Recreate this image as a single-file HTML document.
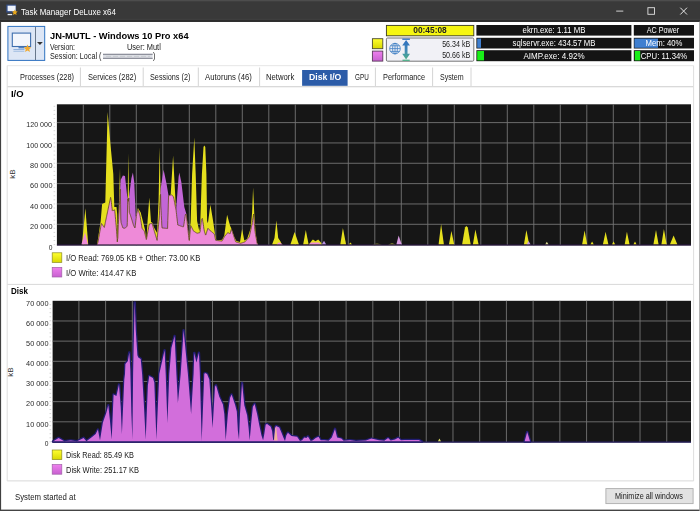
<!DOCTYPE html>
<html><head><meta charset="utf-8"><title>Task Manager DeLuxe x64</title>
<style>
html,body{margin:0;padding:0;background:#fff;}
body{width:700px;height:511px;position:relative;overflow:hidden;font-family:"Liberation Sans",sans-serif;font-size:7.8px;color:#1a1a1a;}
.a{position:absolute;box-sizing:border-box;}
.t{position:absolute;white-space:nowrap;line-height:12px;height:12px;}
#tb{left:0;top:0;width:700px;height:21.7px;background:#393939;}
svg{position:absolute;left:0;top:0;}
</style></head><body>
<div class="a" id="tb"></div>
<svg width="700" height="511" viewBox="0 0 700 511">
<defs>
<linearGradient id="gy" x1="0" y1="0" x2="0" y2="1"><stop offset="0" stop-color="#ffff30"/><stop offset="1" stop-color="#d8d800"/></linearGradient>
<linearGradient id="gm" x1="0" y1="0" x2="0" y2="1"><stop offset="0" stop-color="#ee80ee"/><stop offset="1" stop-color="#c860d0"/></linearGradient>
<linearGradient id="gar" x1="0" y1="0" x2="0" y2="1"><stop offset="0" stop-color="#2f6fc0"/><stop offset="0.5" stop-color="#3f86b8"/><stop offset="1" stop-color="#4db08a"/></linearGradient>
<filter id="bl" x="-5%" y="-50%" width="110%" height="200%"><feGaussianBlur stdDeviation="0.55"/></filter>
</defs>
<!-- title bar shading -->
<rect x="0" y="0" width="700" height="1" fill="#4d4d4d"/>
<rect x="0" y="1" width="700" height="1" fill="#3f3f3f"/>
<rect x="0" y="18.6" width="700" height="1.6" fill="#3e3e3e"/>
<rect x="0" y="20.2" width="700" height="1.5" fill="#2b2b2b"/>
<!-- app icon -->
<g>
<rect x="6.3" y="4.6" width="9.8" height="8" fill="#35508a"/>
<rect x="7.6" y="5.7" width="8" height="5.4" fill="#eef3fc"/>
<rect x="7.6" y="13.9" width="4.6" height="1.3" fill="#e8edf5"/>
<path d="M14.8 9.4l0.85 1.9 2.05 0.2-1.55 1.4 0.45 2.05-1.8-1.05-1.8 1.05 0.45-2.05-1.55-1.4 2.05-0.2z" fill="#eaa81c"/>
</g>
<!-- window controls -->
<path d="M616.2 11.1H623.3" stroke="#e2e2e2" stroke-width="0.9" fill="none"/>
<rect x="647.9" y="7.7" width="6.6" height="6.6" fill="none" stroke="#e2e2e2" stroke-width="0.9"/>
<path d="M680.3 7.7L687 14.5M687 7.7L680.3 14.5" stroke="#ececec" stroke-width="0.95" fill="none"/>
<!-- window borders -->
<rect x="0" y="21.6" width="1.1" height="490" fill="#404040"/>
<rect x="0" y="509.6" width="700" height="1.4" fill="#444"/>
<rect x="699.2" y="21.6" width="0.8" height="490" fill="#a0a0a0"/>
<!-- computer button -->
<rect x="7.9" y="26.4" width="36.8" height="34" fill="#dde6f5" stroke="#2f72c0" stroke-width="1"/>
<path d="M35.5 27V60" stroke="#4a5a70" stroke-width="0.8"/>
<path d="M37 41.9h5.8l-2.9 3z" fill="#333"/>
<g>
<rect x="12.3" y="33.1" width="18.3" height="13.4" fill="#f3f6fc" stroke="#3f6fae" stroke-width="1.1"/>
<rect x="18.5" y="47" width="6" height="1.4" fill="#4f7fc0"/>
<rect x="13.4" y="49" width="11" height="1.1" fill="#8fb0dc"/>
<rect x="13.4" y="50.8" width="11" height="1.1" fill="#a9c2e4"/>
<path d="M27.5 44.6l1.1 2.5 2.7 0.3-2 1.8 0.6 2.7-2.4-1.4-2.4 1.4 0.6-2.7-2-1.8 2.7-0.3z" fill="#f0aa30"/>
</g>
<!-- blurred session name -->
<g filter="url(#bl)"><rect x="103" y="53.8" width="49.6" height="5.2" fill="#dcdee4"/><path d="M103 54.4H152.6M103 58.4H152.6" stroke="#8e919c" stroke-width="1.1"/><path d="M106 56.4H150" stroke="#c2c5cc" stroke-width="0.8" stroke-dasharray="5 2"/></g>
<!-- timer -->
<rect x="386.4" y="25.4" width="87.4" height="10.4" fill="#f6f612" stroke="#3a3a20" stroke-width="0.9"/>
<rect x="386.4" y="38" width="87.4" height="23.2" rx="1.2" fill="#f1f1f6" stroke="#767676" stroke-width="1"/>
<rect x="372.4" y="38.7" width="10.4" height="10" fill="url(#gy)" stroke="#4a4a30" stroke-width="0.9"/>
<rect x="372.4" y="51.1" width="10.4" height="10" fill="url(#gm)" stroke="#5a3a5a" stroke-width="0.9"/>
<!-- globe -->
<g fill="none" stroke="#3f7fc4" stroke-width="0.8">
<circle cx="395" cy="48.6" r="5.3"/>
<ellipse cx="395" cy="48.6" rx="2.4" ry="5.3"/>
<path d="M389.7 48.6H400.3M395 43.3V53.9M390.5 45.8H399.5M390.5 51.4H399.5"/>
</g>
<!-- arrows -->
<path d="M402.3 39.2H409.9" stroke="#2f6fc0" stroke-width="1.3"/>
<path d="M402.5 60.3H409.7" stroke="#4db08a" stroke-width="1.3"/>
<path d="M406.1 40l3.9 5.6h-2.5v8.2h2.5l-3.9 5.6l-3.9-5.6h2.5v-8.2h-2.5z" fill="url(#gar)"/>
<!-- black bars -->
<g fill="#141414">
<rect x="476.4" y="25" width="155" height="10.6"/>
<rect x="476.4" y="37.8" width="155" height="10.7"/>
<rect x="476.4" y="50.2" width="155" height="11"/>
<rect x="633.8" y="25" width="60.2" height="10.6"/>
<rect x="633.8" y="37.8" width="60.2" height="10.7"/>
<rect x="633.8" y="50.2" width="60.2" height="11"/>
</g>
<rect x="477.2" y="38.6" width="3.8" height="9.2" fill="#3f7fd0"/>
<rect x="477.2" y="51" width="6.8" height="9.4" fill="#18ee18"/>
<rect x="634.4" y="38.6" width="23.6" height="9.2" fill="#3f7fd0"/>
<rect x="634.8" y="51" width="5.4" height="9.4" fill="#18ee18"/>
<!-- tab strip + panel -->
<path d="M7.2 65.7H693.6" stroke="#e6e6e6" stroke-width="1" fill="none"/><path d="M7.2 86.8H693.6" stroke="#cdcdcd" stroke-width="1.1" fill="none"/><path d="M7.2 284.4H693.6M7.2 480.9H693.6" stroke="#d8d8d8" stroke-width="1" fill="none"/>
<path d="M7.2 65.6V481M693.6 65.6V481" stroke="#dedede" stroke-width="1" fill="none"/>
<path d="M80.4 67.5V86M143.2 67.5V86M198.3 67.5V86M259.6 67.5V86M375.4 67.5V86M432.6 67.5V86M471 67.5V86" stroke="#d4d4d4" stroke-width="1" fill="none"/>
<rect x="302.1" y="70" width="45.5" height="15.8" fill="#2c5ca8"/>
<!-- charts -->
<rect x="56.9" y="104.3" width="634.1" height="141.1" fill="#161616"/>
<path d="M83.30 104.3V245.4M109.80 104.3V245.4M136.30 104.3V245.4M162.80 104.3V245.4M189.30 104.3V245.4M215.80 104.3V245.4M242.30 104.3V245.4M268.80 104.3V245.4M295.30 104.3V245.4M321.80 104.3V245.4M348.30 104.3V245.4M374.80 104.3V245.4M401.30 104.3V245.4M427.80 104.3V245.4M454.30 104.3V245.4M480.80 104.3V245.4M507.30 104.3V245.4M533.80 104.3V245.4M560.30 104.3V245.4M586.80 104.3V245.4M613.30 104.3V245.4M639.80 104.3V245.4M666.30 104.3V245.4M56.9 122.60H691.0M56.9 142.94H691.0M56.9 163.28H691.0M56.9 183.62H691.0M56.9 203.96H691.0M56.9 224.30H691.0" stroke="#747474" stroke-width="0.9" fill="none"/>
<polygon points="82.0,244.6 82.0,244.6 85.4,208.3 88.2,244.6 88.2,244.6" fill="#e6e01e"/>
<polygon points="97.1,244.6 97.1,244.6 100.7,221.1 102.1,204.0 105.3,202.6 107.6,111.9 110.7,146.9 113.3,174.0 114.3,206.9 116.5,207.0 117.2,214.0 117.8,240.0 120.0,168.3 120.9,222.0 122.9,228.0 125.0,228.3 127.3,226.0 128.3,153.3 129.2,212.0 130.7,216.0 133.6,225.4 135.0,228.3 136.5,215.0 137.9,208.0 140.7,212.6 145.0,229.7 146.4,239.7 147.5,222.0 149.3,197.6 151.0,222.0 152.1,222.5 154.3,228.0 157.1,233.0 158.6,200.0 159.7,146.9 160.8,205.0 162.0,228.0 167.6,228.5 168.6,196.0 170.7,194.5 173.1,155.4 175.9,208.3 176.2,211.0 177.8,225.0 183.5,227.0 185.5,214.0 186.4,215.0 189.2,241.0 190.7,221.1 192.1,174.0 194.3,137.6 195.7,174.0 197.1,221.1 199.3,231.1 200.2,225.0 201.9,174.0 203.5,147.0 204.3,145.4 205.3,147.0 206.4,174.0 207.1,221.1 207.9,223.3 210.4,204.7 212.9,219.7 215.0,234.0 216.4,240.4 222.1,239.7 224.3,235.4 227.1,214.7 230.0,225.4 232.1,230.4 234.3,236.9 236.4,241.1 240.0,241.9 242.1,229.0 244.3,240.4 247.1,239.0 250.7,228.3 252.1,212.6 253.1,187.6 254.3,214.0 255.5,232.0 257.1,243.3 258.0,244.6 258.0,244.6" fill="#e6e01e"/>
<polygon points="97.1,244.6 97.1,244.6 97.9,242.6 101.4,223.3 104.3,227.6 108.6,206.9 110.7,196.9 112.4,211.1 114.7,209.7 116.4,228.3 117.4,242.6 120.7,179.7 122.9,175.4 125.0,176.1 127.1,195.4 128.4,201.5 131.4,178.3 132.9,172.6 134.3,182.6 135.7,216.9 137.9,209.0 140.0,215.4 142.1,228.3 144.3,231.1 146.4,239.7 149.3,224.0 152.1,223.3 154.3,231.1 157.1,240.4 159.3,216.9 160.7,188.3 163.6,169.7 166.4,183.0 168.6,196.0 171.4,194.7 173.6,196.9 175.7,208.3 176.1,209.7 178.6,177.0 179.3,172.6 181.4,182.6 184.3,206.9 186.4,214.0 189.3,241.1 190.7,225.4 193.6,231.1 197.1,233.3 200.0,232.6 201.4,220.0 202.4,218.3 204.3,231.0 205.7,235.4 207.9,228.3 210.7,231.1 214.3,234.0 215.7,240.4 222.1,241.1 224.3,236.9 227.9,232.6 230.0,234.0 231.4,229.0 233.6,235.4 235.7,241.9 240.7,243.3 245.0,241.9 249.3,236.9 252.1,224.0 253.6,214.0 255.0,231.1 257.1,243.3 258.0,244.6 258.0,244.6" fill="#c266d6"/>
<polygon points="97.1,244.6 97.1,244.6 97.3,244.0 97.6,243.4 97.8,242.7 98.1,241.5 98.3,240.1 98.6,238.7 98.8,237.4 99.1,236.0 99.3,234.6 99.6,233.2 99.8,231.8 100.1,230.5 100.3,229.1 100.6,227.7 100.8,226.3 101.1,225.0 101.3,223.6 101.6,223.6 101.8,224.0 102.1,224.3 102.3,224.7 102.6,225.1 102.8,225.4 103.1,225.8 103.3,226.2 103.6,226.6 103.8,226.9 104.1,227.3 104.3,227.4 104.6,226.2 104.8,225.0 105.1,223.7 105.3,222.5 105.6,221.3 105.8,220.1 106.1,218.9 106.3,217.7 106.6,216.5 106.8,215.3 107.1,214.1 107.3,212.9 107.6,211.7 107.8,210.5 108.1,209.3 108.3,208.1 108.6,206.9 108.8,205.7 109.1,204.5 109.3,203.3 109.6,202.1 109.8,200.9 110.1,199.8 110.3,198.6 110.6,197.4 110.8,198.2 111.1,200.2 111.3,202.3 111.6,204.4 111.8,206.5 112.1,208.6 112.3,210.7 112.6,211.0 112.8,210.8 113.1,210.7 113.3,210.5 113.6,210.4 113.8,210.2 114.1,210.1 114.3,209.9 114.6,209.8 114.8,211.3 115.1,214.1 115.3,216.8 115.6,219.5 115.8,222.3 116.1,225.0 116.3,227.8 116.6,231.2 116.8,234.7 117.1,238.3 117.3,241.9 117.6,238.8 117.8,238.4 118.1,230.2 118.3,224.5 118.6,219.7 118.8,215.0 119.1,210.2 119.3,205.4 119.6,200.7 119.8,195.9 120.1,191.1 120.3,189.2 120.6,204.1 120.8,219.0 121.1,222.6 121.3,223.3 121.6,224.1 121.8,224.8 122.1,225.6 122.3,226.3 122.6,227.1 122.8,227.8 123.1,228.0 123.3,228.1 123.6,228.1 123.8,228.1 124.1,228.2 124.3,228.2 124.6,228.2 124.8,228.3 125.1,228.2 125.3,228.0 125.6,227.7 125.8,227.5 126.1,227.2 126.3,227.0 126.6,226.7 126.8,226.5 127.1,226.2 127.3,222.4 127.6,204.2 127.8,198.9 128.1,200.1 128.3,201.3 128.6,200.0 128.8,198.0 129.1,205.5 129.3,212.4 129.6,213.1 129.8,213.7 130.1,214.4 130.3,215.1 130.6,215.7 130.8,216.5 131.1,217.3 131.3,218.1 131.6,218.9 131.8,219.7 132.1,220.5 132.3,221.3 132.6,222.2 132.8,223.0 133.1,223.8 133.3,224.6 133.6,225.4 133.8,225.9 134.1,226.4 134.3,227.0 134.6,227.5 134.8,228.0 135.1,227.4 135.3,225.2 135.6,223.0 135.8,220.8 136.1,218.5 136.3,216.3 136.6,214.5 136.8,213.3 137.1,212.0 137.3,211.0 137.6,210.1 137.8,209.2 138.1,209.6 138.3,210.4 138.6,211.1 138.8,211.9 139.1,212.7 139.3,213.4 139.6,214.2 139.8,214.9 140.1,216.0 140.3,217.5 140.6,219.1 140.8,220.6 141.1,222.2 141.3,223.7 141.6,225.2 141.8,226.8 142.1,228.3 142.3,228.6 142.6,228.9 142.8,229.3 143.1,229.6 143.3,229.9 143.6,230.2 143.8,230.5 144.1,230.8 144.3,231.3 144.6,232.3 144.8,233.4 145.1,234.4 145.3,235.4 145.6,236.4 145.8,237.4 146.1,238.5 146.3,239.5 146.6,238.6 146.8,237.3 147.1,235.9 147.3,234.6 147.6,233.2 147.8,231.9 148.1,230.5 148.3,229.1 148.6,227.8 148.8,226.4 149.1,225.1 149.3,224.0 149.6,223.9 149.8,223.9 150.1,223.8 150.3,223.7 150.6,223.7 150.8,223.6 151.1,223.6 151.3,223.5 151.6,223.4 151.8,223.4 152.1,223.3 152.3,224.2 152.6,225.1 152.8,226.0 153.1,226.8 153.3,227.7 153.6,228.6 153.8,229.5 154.1,230.4 154.3,231.3 154.6,232.1 154.8,232.9 155.1,233.8 155.3,234.6 155.6,235.4 155.8,236.2 156.1,237.1 156.3,237.9 156.6,238.7 156.8,239.6 157.1,240.4 157.3,237.7 157.6,235.1 157.8,232.4 158.1,229.7 158.3,227.0 158.6,224.4 158.8,221.7 159.1,219.0 159.3,215.9 159.6,210.8 159.8,205.7 160.1,200.6 160.3,195.5 160.6,194.4 160.8,206.0 161.1,210.7 161.3,215.5 161.6,220.3 161.8,225.1 162.1,228.0 162.3,228.0 162.6,228.1 162.8,228.1 163.1,228.1 163.3,228.1 163.6,228.1 163.8,228.2 164.1,228.2 164.3,228.2 164.6,228.2 164.8,228.3 165.1,228.3 165.3,228.3 165.6,228.3 165.8,228.3 166.1,228.4 166.3,228.4 166.6,228.4 166.8,228.4 167.1,228.5 167.3,228.5 167.6,228.5 167.8,220.4 168.1,212.2 168.3,204.1 168.6,196.0 168.8,195.9 169.1,195.8 169.3,195.7 169.6,195.5 169.8,195.4 170.1,195.3 170.3,195.2 170.6,195.1 170.8,195.0 171.1,194.8 171.3,194.7 171.6,194.9 171.8,195.1 172.1,195.4 172.3,195.6 172.6,195.9 172.8,196.2 173.1,196.4 173.3,196.7 173.6,196.9 173.8,198.3 174.1,199.6 174.3,201.0 174.6,202.3 174.8,203.7 175.1,205.0 175.3,206.4 175.6,207.8 175.8,208.8 176.1,210.1 176.3,212.3 176.6,214.5 176.8,216.7 177.1,218.9 177.3,221.1 177.6,223.2 177.8,225.0 178.1,225.1 178.3,225.2 178.6,225.3 178.8,225.4 179.1,225.5 179.3,225.5 179.6,225.6 179.8,225.7 180.1,225.8 180.3,225.9 180.6,226.0 180.8,226.1 181.1,226.2 181.3,226.2 181.6,226.3 181.8,226.4 182.1,226.5 182.3,226.6 182.6,226.7 182.8,226.8 183.1,226.9 183.3,226.9 183.6,226.4 183.8,224.7 184.1,223.1 184.3,221.5 184.6,219.9 184.8,218.2 185.1,216.6 185.3,215.0 185.6,214.1 185.8,214.4 186.1,214.7 186.3,214.9 186.6,216.9 186.8,219.2 187.1,221.5 187.3,223.8 187.6,226.1 187.8,228.5 188.1,230.8 188.3,233.1 188.6,235.4 188.8,237.8 189.1,240.1 189.3,240.5 189.6,237.7 189.8,234.9 190.1,232.1 190.3,229.3 190.6,226.5 190.8,225.7 191.1,226.2 191.3,226.7 191.6,227.2 191.8,227.7 192.1,228.2 192.3,228.6 192.6,229.1 192.8,229.6 193.1,230.1 193.3,230.6 193.6,231.1 193.8,231.3 194.1,231.4 194.3,231.6 194.6,231.7 194.8,231.9 195.1,232.0 195.3,232.2 195.6,232.4 195.8,232.5 196.1,232.7 196.3,232.8 196.6,233.0 196.8,233.1 197.1,233.3 197.3,233.2 197.6,233.2 197.8,233.1 198.1,233.1 198.3,233.0 198.6,232.9 198.8,232.9 199.1,232.8 199.3,232.8 199.6,232.7 199.8,232.6 200.1,231.7 200.3,229.5 200.6,227.2 200.8,225.0 201.1,222.7 201.3,220.5 201.6,219.7 201.8,219.2 202.1,218.8 202.3,218.4 202.6,219.6 202.8,221.3 203.1,223.0 203.3,224.6 203.6,226.3 203.8,228.0 204.1,229.7 204.3,231.2 204.6,231.9 204.8,232.7 205.1,233.5 205.3,234.3 205.6,235.1 205.8,234.9 206.1,234.1 206.3,233.3 206.6,232.5 206.8,231.7 207.1,230.9 207.3,230.1 207.6,229.3 207.8,228.5 208.1,228.5 208.3,228.8 208.6,229.0 208.8,229.2 209.1,229.5 209.3,229.8 209.6,230.0 209.8,230.2 210.1,230.5 210.3,230.8 210.6,231.0 210.8,231.2 211.1,231.4 211.3,231.6 211.6,231.8 211.8,232.0 212.1,232.2 212.3,232.4 212.6,232.6 212.8,232.8 213.1,233.0 213.3,233.2 213.6,233.4 213.8,233.6 214.1,233.8 214.3,234.2 214.6,235.4 214.8,236.5 215.1,237.7 215.3,238.8 215.6,239.9 215.8,240.4 216.1,240.4 216.3,240.5 216.6,240.5 216.8,240.5 217.1,240.6 217.3,240.6 217.6,240.6 217.8,240.6 218.1,240.7 218.3,240.7 218.6,240.7 218.8,240.7 219.1,240.8 219.3,240.8 219.6,240.8 219.8,240.9 220.1,240.9 220.3,240.9 220.6,240.9 220.8,241.0 221.1,241.0 221.3,241.0 221.6,241.0 221.8,241.1 222.1,241.1 222.3,240.6 222.6,240.1 222.8,239.7 223.1,239.2 223.3,238.7 223.6,238.2 223.8,237.8 224.1,237.3 224.3,236.8 224.6,236.5 224.8,236.2 225.1,235.9 225.3,235.6 225.6,235.3 225.8,235.0 226.1,234.8 226.3,234.5 226.6,234.2 226.8,233.9 227.1,233.6 227.3,233.3 227.6,233.0 227.8,232.7 228.1,232.7 228.3,232.9 228.6,233.1 228.8,233.2 229.1,233.4 229.3,233.6 229.6,233.7 229.8,233.9 230.1,233.6 230.3,232.8 230.6,231.9 230.8,231.0 231.1,230.1 231.3,229.2 231.6,229.6 231.8,230.3 232.1,231.0 232.3,231.8 232.6,232.5 232.8,233.2 233.1,233.9 233.3,234.7 233.6,235.4 233.8,236.2 234.1,236.9 234.3,237.7 234.6,238.5 234.8,239.3 235.1,240.0 235.3,240.8 235.6,241.6 235.8,241.9 236.1,242.0 236.3,242.1 236.6,242.2 236.8,242.2 237.1,242.3 237.3,242.4 237.6,242.4 237.8,242.5 238.1,242.6 238.3,242.6 238.6,242.7 238.8,242.8 239.1,242.9 239.3,242.9 239.6,243.0 239.8,243.1 240.1,243.1 240.3,243.2 240.6,243.3 240.8,243.3 241.1,243.2 241.3,243.1 241.6,243.0 241.8,242.9 242.1,242.8 242.3,242.8 242.6,242.7 242.8,242.6 243.1,242.5 243.3,242.4 243.6,242.4 243.8,242.3 244.1,242.2 244.3,242.1 244.6,242.0 244.8,241.9 245.1,241.8 245.3,241.5 245.6,241.2 245.8,240.9 246.1,240.6 246.3,240.3 246.6,240.0 246.8,239.7 247.1,239.5 247.3,239.2 247.6,238.9 247.8,238.6 248.1,238.3 248.3,238.0 248.6,237.7 248.8,237.4 249.1,237.1 249.3,236.7 249.6,235.5 249.8,234.4 250.1,233.2 250.3,232.1 250.6,230.9 250.8,229.8 251.1,228.6 251.3,227.5 251.6,226.3 251.8,225.2 252.1,224.0 252.3,222.3 252.6,220.7 252.8,219.0 253.1,217.3 253.3,215.7 253.6,214.0 253.8,217.1 254.1,220.1 254.3,223.2 254.6,226.2 254.8,229.3 255.1,231.7 255.3,233.1 255.6,234.6 255.8,236.0 256.1,237.5 256.4,238.9 256.6,240.4 256.9,241.8 257.1,243.3 257.4,243.7 257.6,244.0 257.9,244.4 257.9,244.6" fill="#ee8ad8"/>
<polyline points="97.1,244.6 97.3,244.0 97.6,243.4 97.8,242.7 98.1,241.5 98.3,240.1 98.6,238.7 98.8,237.4 99.1,236.0 99.3,234.6 99.6,233.2 99.8,231.8 100.1,230.5 100.3,229.1 100.6,227.7 100.8,226.3 101.1,225.0 101.3,223.6 101.6,223.6 101.8,224.0 102.1,224.3 102.3,224.7 102.6,225.1 102.8,225.4 103.1,225.8 103.3,226.2 103.6,226.6 103.8,226.9 104.1,227.3 104.3,227.4 104.6,226.2 104.8,225.0 105.1,223.7 105.3,222.5 105.6,221.3 105.8,220.1 106.1,218.9 106.3,217.7 106.6,216.5 106.8,215.3 107.1,214.1 107.3,212.9 107.6,211.7 107.8,210.5 108.1,209.3 108.3,208.1 108.6,206.9 108.8,205.7 109.1,204.5 109.3,203.3 109.6,202.1 109.8,200.9 110.1,199.8 110.3,198.6 110.6,197.4 110.8,198.2 111.1,200.2 111.3,202.3 111.6,204.4 111.8,206.5 112.1,208.6 112.3,210.7 112.6,211.0 112.8,210.8 113.1,210.7 113.3,210.5 113.6,210.4 113.8,210.2 114.1,210.1 114.3,209.9 114.6,209.8 114.8,211.3 115.1,214.1 115.3,216.8 115.6,219.5 115.8,222.3 116.1,225.0 116.3,227.8 116.6,231.2 116.8,234.7 117.1,238.3 117.3,241.9 117.6,238.8 117.8,238.4 118.1,230.2 118.3,224.5 118.6,219.7 118.8,215.0 119.1,210.2 119.3,205.4 119.6,200.7 119.8,195.9 120.1,191.1 120.3,189.2 120.6,204.1 120.8,219.0 121.1,222.6 121.3,223.3 121.6,224.1 121.8,224.8 122.1,225.6 122.3,226.3 122.6,227.1 122.8,227.8 123.1,228.0 123.3,228.1 123.6,228.1 123.8,228.1 124.1,228.2 124.3,228.2 124.6,228.2 124.8,228.3 125.1,228.2 125.3,228.0 125.6,227.7 125.8,227.5 126.1,227.2 126.3,227.0 126.6,226.7 126.8,226.5 127.1,226.2 127.3,222.4 127.6,204.2 127.8,198.9 128.1,200.1 128.3,201.3 128.6,200.0 128.8,198.0 129.1,205.5 129.3,212.4 129.6,213.1 129.8,213.7 130.1,214.4 130.3,215.1 130.6,215.7 130.8,216.5 131.1,217.3 131.3,218.1 131.6,218.9 131.8,219.7 132.1,220.5 132.3,221.3 132.6,222.2 132.8,223.0 133.1,223.8 133.3,224.6 133.6,225.4 133.8,225.9 134.1,226.4 134.3,227.0 134.6,227.5 134.8,228.0 135.1,227.4 135.3,225.2 135.6,223.0 135.8,220.8 136.1,218.5 136.3,216.3 136.6,214.5 136.8,213.3 137.1,212.0 137.3,211.0 137.6,210.1 137.8,209.2 138.1,209.6 138.3,210.4 138.6,211.1 138.8,211.9 139.1,212.7 139.3,213.4 139.6,214.2 139.8,214.9 140.1,216.0 140.3,217.5 140.6,219.1 140.8,220.6 141.1,222.2 141.3,223.7 141.6,225.2 141.8,226.8 142.1,228.3 142.3,228.6 142.6,228.9 142.8,229.3 143.1,229.6 143.3,229.9 143.6,230.2 143.8,230.5 144.1,230.8 144.3,231.3 144.6,232.3 144.8,233.4 145.1,234.4 145.3,235.4 145.6,236.4 145.8,237.4 146.1,238.5 146.3,239.5 146.6,238.6 146.8,237.3 147.1,235.9 147.3,234.6 147.6,233.2 147.8,231.9 148.1,230.5 148.3,229.1 148.6,227.8 148.8,226.4 149.1,225.1 149.3,224.0 149.6,223.9 149.8,223.9 150.1,223.8 150.3,223.7 150.6,223.7 150.8,223.6 151.1,223.6 151.3,223.5 151.6,223.4 151.8,223.4 152.1,223.3 152.3,224.2 152.6,225.1 152.8,226.0 153.1,226.8 153.3,227.7 153.6,228.6 153.8,229.5 154.1,230.4 154.3,231.3 154.6,232.1 154.8,232.9 155.1,233.8 155.3,234.6 155.6,235.4 155.8,236.2 156.1,237.1 156.3,237.9 156.6,238.7 156.8,239.6 157.1,240.4 157.3,237.7 157.6,235.1 157.8,232.4 158.1,229.7 158.3,227.0 158.6,224.4 158.8,221.7 159.1,219.0 159.3,215.9 159.6,210.8 159.8,205.7 160.1,200.6 160.3,195.5 160.6,194.4 160.8,206.0 161.1,210.7 161.3,215.5 161.6,220.3 161.8,225.1 162.1,228.0 162.3,228.0 162.6,228.1 162.8,228.1 163.1,228.1 163.3,228.1 163.6,228.1 163.8,228.2 164.1,228.2 164.3,228.2 164.6,228.2 164.8,228.3 165.1,228.3 165.3,228.3 165.6,228.3 165.8,228.3 166.1,228.4 166.3,228.4 166.6,228.4 166.8,228.4 167.1,228.5 167.3,228.5 167.6,228.5 167.8,220.4 168.1,212.2 168.3,204.1 168.6,196.0 168.8,195.9 169.1,195.8 169.3,195.7 169.6,195.5 169.8,195.4 170.1,195.3 170.3,195.2 170.6,195.1 170.8,195.0 171.1,194.8 171.3,194.7 171.6,194.9 171.8,195.1 172.1,195.4 172.3,195.6 172.6,195.9 172.8,196.2 173.1,196.4 173.3,196.7 173.6,196.9 173.8,198.3 174.1,199.6 174.3,201.0 174.6,202.3 174.8,203.7 175.1,205.0 175.3,206.4 175.6,207.8 175.8,208.8 176.1,210.1 176.3,212.3 176.6,214.5 176.8,216.7 177.1,218.9 177.3,221.1 177.6,223.2 177.8,225.0 178.1,225.1 178.3,225.2 178.6,225.3 178.8,225.4 179.1,225.5 179.3,225.5 179.6,225.6 179.8,225.7 180.1,225.8 180.3,225.9 180.6,226.0 180.8,226.1 181.1,226.2 181.3,226.2 181.6,226.3 181.8,226.4 182.1,226.5 182.3,226.6 182.6,226.7 182.8,226.8 183.1,226.9 183.3,226.9 183.6,226.4 183.8,224.7 184.1,223.1 184.3,221.5 184.6,219.9 184.8,218.2 185.1,216.6 185.3,215.0 185.6,214.1 185.8,214.4 186.1,214.7 186.3,214.9 186.6,216.9 186.8,219.2 187.1,221.5 187.3,223.8 187.6,226.1 187.8,228.5 188.1,230.8 188.3,233.1 188.6,235.4 188.8,237.8 189.1,240.1 189.3,240.5 189.6,237.7 189.8,234.9 190.1,232.1 190.3,229.3 190.6,226.5 190.8,225.7 191.1,226.2 191.3,226.7 191.6,227.2 191.8,227.7 192.1,228.2 192.3,228.6 192.6,229.1 192.8,229.6 193.1,230.1 193.3,230.6 193.6,231.1 193.8,231.3 194.1,231.4 194.3,231.6 194.6,231.7 194.8,231.9 195.1,232.0 195.3,232.2 195.6,232.4 195.8,232.5 196.1,232.7 196.3,232.8 196.6,233.0 196.8,233.1 197.1,233.3 197.3,233.2 197.6,233.2 197.8,233.1 198.1,233.1 198.3,233.0 198.6,232.9 198.8,232.9 199.1,232.8 199.3,232.8 199.6,232.7 199.8,232.6 200.1,231.7 200.3,229.5 200.6,227.2 200.8,225.0 201.1,222.7 201.3,220.5 201.6,219.7 201.8,219.2 202.1,218.8 202.3,218.4 202.6,219.6 202.8,221.3 203.1,223.0 203.3,224.6 203.6,226.3 203.8,228.0 204.1,229.7 204.3,231.2 204.6,231.9 204.8,232.7 205.1,233.5 205.3,234.3 205.6,235.1 205.8,234.9 206.1,234.1 206.3,233.3 206.6,232.5 206.8,231.7 207.1,230.9 207.3,230.1 207.6,229.3 207.8,228.5 208.1,228.5 208.3,228.8 208.6,229.0 208.8,229.2 209.1,229.5 209.3,229.8 209.6,230.0 209.8,230.2 210.1,230.5 210.3,230.8 210.6,231.0 210.8,231.2 211.1,231.4 211.3,231.6 211.6,231.8 211.8,232.0 212.1,232.2 212.3,232.4 212.6,232.6 212.8,232.8 213.1,233.0 213.3,233.2 213.6,233.4 213.8,233.6 214.1,233.8 214.3,234.2 214.6,235.4 214.8,236.5 215.1,237.7 215.3,238.8 215.6,239.9 215.8,240.4 216.1,240.4 216.3,240.5 216.6,240.5 216.8,240.5 217.1,240.6 217.3,240.6 217.6,240.6 217.8,240.6 218.1,240.7 218.3,240.7 218.6,240.7 218.8,240.7 219.1,240.8 219.3,240.8 219.6,240.8 219.8,240.9 220.1,240.9 220.3,240.9 220.6,240.9 220.8,241.0 221.1,241.0 221.3,241.0 221.6,241.0 221.8,241.1 222.1,241.1 222.3,240.6 222.6,240.1 222.8,239.7 223.1,239.2 223.3,238.7 223.6,238.2 223.8,237.8 224.1,237.3 224.3,236.8 224.6,236.5 224.8,236.2 225.1,235.9 225.3,235.6 225.6,235.3 225.8,235.0 226.1,234.8 226.3,234.5 226.6,234.2 226.8,233.9 227.1,233.6 227.3,233.3 227.6,233.0 227.8,232.7 228.1,232.7 228.3,232.9 228.6,233.1 228.8,233.2 229.1,233.4 229.3,233.6 229.6,233.7 229.8,233.9 230.1,233.6 230.3,232.8 230.6,231.9 230.8,231.0 231.1,230.1 231.3,229.2 231.6,229.6 231.8,230.3 232.1,231.0 232.3,231.8 232.6,232.5 232.8,233.2 233.1,233.9 233.3,234.7 233.6,235.4 233.8,236.2 234.1,236.9 234.3,237.7 234.6,238.5 234.8,239.3 235.1,240.0 235.3,240.8 235.6,241.6 235.8,241.9 236.1,242.0 236.3,242.1 236.6,242.2 236.8,242.2 237.1,242.3 237.3,242.4 237.6,242.4 237.8,242.5 238.1,242.6 238.3,242.6 238.6,242.7 238.8,242.8 239.1,242.9 239.3,242.9 239.6,243.0 239.8,243.1 240.1,243.1 240.3,243.2 240.6,243.3 240.8,243.3 241.1,243.2 241.3,243.1 241.6,243.0 241.8,242.9 242.1,242.8 242.3,242.8 242.6,242.7 242.8,242.6 243.1,242.5 243.3,242.4 243.6,242.4 243.8,242.3 244.1,242.2 244.3,242.1 244.6,242.0 244.8,241.9 245.1,241.8 245.3,241.5 245.6,241.2 245.8,240.9 246.1,240.6 246.3,240.3 246.6,240.0 246.8,239.7 247.1,239.5 247.3,239.2 247.6,238.9 247.8,238.6 248.1,238.3 248.3,238.0 248.6,237.7 248.8,237.4 249.1,237.1 249.3,236.7 249.6,235.5 249.8,234.4 250.1,233.2 250.3,232.1 250.6,230.9 250.8,229.8 251.1,228.6 251.3,227.5 251.6,226.3 251.8,225.2 252.1,224.0 252.3,222.3 252.6,220.7 252.8,219.0 253.1,217.3 253.3,215.7 253.6,214.0 253.8,217.1 254.1,220.1 254.3,223.2 254.6,226.2 254.8,229.3 255.1,231.7 255.3,233.1 255.6,234.6 255.8,236.0 256.1,237.5 256.4,238.9 256.6,240.4 256.9,241.8 257.1,243.3 257.4,243.7 257.6,244.0 257.9,244.4" fill="none" stroke="#5e4a14" stroke-width="0.8" stroke-linejoin="round"/>
<polygon points="81.4,244.6 85.0,232.5 88.0,244.6" fill="#ee8ad8"/>
<polygon points="272.1,244.6 274.5,238.0 276.4,220.4 278.2,238.0 280.5,241.5 281.8,244.6" fill="#e6e01e"/>
<polygon points="276.5,244.6 279.0,242.2 283.0,244.6" fill="#ee8ad8"/>
<polygon points="290.4,244.6 294.6,232.1 298.9,244.6" fill="#e6e01e"/>
<polygon points="303.2,244.6 305.8,230.0 308.6,244.6" fill="#e6e01e"/>
<polygon points="309.0,244.6 311.5,241.0 312.9,239.6 315.5,241.2 318.2,239.6 320.5,242.0 322.0,244.6" fill="#e6e01e"/>
<polygon points="308.6,244.6 311.0,242.6 319.0,242.6 321.0,244.6" fill="#ee8ad8"/>
<polygon points="321.8,244.6 324.0,240.7 326.2,244.6" fill="#b890e0"/>
<polygon points="340.3,244.6 342.9,227.9 346.1,244.6" fill="#e6e01e"/>
<polygon points="348.8,244.6 350.4,242.6 352.0,244.6" fill="#e6e01e"/>
<polygon points="372.0,244.6 377.0,243.6 382.0,244.6" fill="#8a8a30"/>
<polygon points="388.0,244.6 392.0,243.3 396.0,244.6" fill="#a0a030"/>
<polygon points="396.4,244.6 398.6,235.4 401.8,244.6" fill="#d89ae0"/>
<polygon points="438.6,244.6 441.1,224.0 443.9,244.6" fill="#e6e01e"/>
<polygon points="448.9,244.6 451.4,231.1 454.2,244.6" fill="#e6e01e"/>
<polygon points="462.1,244.6 465.0,227.5 466.4,226.1 467.8,227.5 470.7,244.6" fill="#e6e01e"/>
<polygon points="472.9,244.6 475.4,229.6 478.6,244.6" fill="#e6e01e"/>
<polygon points="523.9,244.6 526.4,230.0 529.2,244.6" fill="#e6e01e"/>
<polygon points="526.6,244.6 528.6,241.0 530.6,244.6" fill="#c79ae0"/>
<polygon points="545.2,244.6 546.8,241.8 548.6,244.6" fill="#d8d890"/>
<polygon points="582.1,244.6 584.6,230.4 587.2,244.6" fill="#e6e01e"/>
<polygon points="590.4,244.6 592.1,241.6 593.8,244.6" fill="#e6e01e"/>
<polygon points="602.9,244.6 605.6,231.7 608.4,244.6" fill="#e6e01e"/>
<polygon points="612.0,244.6 613.6,241.6 615.2,244.6" fill="#e6e01e"/>
<polygon points="624.7,244.6 626.9,231.7 629.6,244.6" fill="#e6e01e"/>
<polygon points="633.4,244.6 635.0,241.6 636.6,244.6" fill="#e6e01e"/>
<polygon points="653.4,244.6 656.0,230.0 658.6,244.6" fill="#e6e01e"/>
<polygon points="661.4,244.6 663.9,228.9 666.7,244.6" fill="#e6e01e"/>
<polygon points="669.9,244.6 673.6,235.4 677.4,244.6" fill="#e6e01e"/>
<rect x="56.9" y="244.5" width="634.1" height="1" fill="#2a1446"/>
<path d="M53.6 244.60h1.6M53.6 240.53h1.6M53.6 236.46h1.6M53.6 232.40h1.6M53.6 228.33h1.6M53.6 224.26h1.6M53.6 220.19h1.6M53.6 216.12h1.6M53.6 212.06h1.6M53.6 207.99h1.6M53.6 203.92h1.6M53.6 199.85h1.6M53.6 195.78h1.6M53.6 191.72h1.6M53.6 187.65h1.6M53.6 183.58h1.6M53.6 179.51h1.6M53.6 175.44h1.6M53.6 171.38h1.6M53.6 167.31h1.6M53.6 163.24h1.6M53.6 159.17h1.6M53.6 155.10h1.6M53.6 151.04h1.6M53.6 146.97h1.6M53.6 142.90h1.6M53.6 138.83h1.6M53.6 134.76h1.6M53.6 130.70h1.6M53.6 126.63h1.6M53.6 122.56h1.6M53.6 118.49h1.6M53.6 114.42h1.6M53.6 110.36h1.6M53.6 106.29h1.6" stroke="#c4c4c4" stroke-width="0.7" fill="none"/>
<rect x="52.6" y="300.8" width="638.4" height="141.7" fill="#161616"/>
<path d="M78.90 300.8V442.5M105.62 300.8V442.5M132.34 300.8V442.5M159.06 300.8V442.5M185.78 300.8V442.5M212.50 300.8V442.5M239.22 300.8V442.5M265.94 300.8V442.5M292.66 300.8V442.5M319.38 300.8V442.5M346.10 300.8V442.5M372.82 300.8V442.5M399.54 300.8V442.5M426.26 300.8V442.5M452.98 300.8V442.5M479.70 300.8V442.5M506.42 300.8V442.5M533.14 300.8V442.5M559.86 300.8V442.5M586.58 300.8V442.5M613.30 300.8V442.5M640.02 300.8V442.5M666.74 300.8V442.5M52.6 320.97H691.0M52.6 341.14H691.0M52.6 361.31H691.0M52.6 381.48H691.0M52.6 401.65H691.0M52.6 421.82H691.0" stroke="#747474" stroke-width="0.9" fill="none"/>
<polygon points="52.9,441.6 52.9,441.6 58.6,437.9 64.3,441.3 70.7,440.6 77.0,441.3 83.6,437.9 86.4,441.3 91.4,437.4 95.7,433.9 97.9,429.6 100.0,440.3 102.9,422.4 106.4,412.4 108.3,405.3 110.0,421.0 111.7,439.6 113.6,394.6 116.4,396.0 119.0,384.6 120.7,406.7 121.9,433.9 124.3,379.6 125.0,374.0 125.4,363.9 127.9,361.0 129.3,352.4 130.3,369.6 131.4,413.9 132.4,439.6 133.1,374.0 133.7,343.9 134.7,302.4 135.7,329.6 137.4,355.3 138.3,357.4 140.7,358.9 142.1,374.0 143.6,399.6 145.7,439.6 147.9,385.3 149.3,376.0 152.9,378.1 154.3,382.4 156.4,439.6 159.3,374.0 164.6,350.3 165.7,374.0 167.4,423.1 169.3,374.0 171.4,348.1 174.6,336.0 176.4,374.0 177.9,403.1 180.7,374.0 183.6,330.3 187.9,374.0 191.1,413.9 193.6,374.0 194.3,353.1 196.4,362.4 198.9,352.8 199.8,372.0 201.7,441.0 204.3,373.9 205.0,373.1 207.1,373.9 209.3,379.6 210.7,399.6 212.6,428.1 215.0,386.7 216.0,385.3 219.3,396.7 222.9,404.6 224.3,413.9 225.7,440.3 227.9,413.9 230.0,398.1 231.6,394.6 235.0,404.6 236.8,411.5 237.9,431.0 239.0,439.6 240.0,413.9 242.1,383.1 244.3,405.3 247.1,415.3 248.6,428.1 249.7,440.3 251.4,421.0 252.9,406.7 254.6,403.9 257.1,413.9 259.3,425.3 261.4,435.3 263.1,440.3 264.3,433.9 265.7,424.6 267.1,423.9 270.7,426.7 272.1,431.0 273.1,439.6 274.0,440.3 275.0,428.1 276.0,426.0 279.3,427.4 281.4,432.4 283.6,438.1 285.0,441.0 286.4,435.3 287.9,432.7 291.4,436.0 297.1,436.7 300.0,441.0 302.1,440.3 304.3,437.4 306.4,438.1 307.9,436.4 310.7,441.0 312.9,440.3 315.7,438.1 318.6,436.7 320.7,440.3 324.3,440.3 328.6,440.7 331.8,437.5 335.0,428.9 337.1,437.5 341.4,438.6 343.6,440.7 350.0,440.3 356.0,441.0 366.0,440.5 371.4,438.6 379.0,440.3 384.3,440.7 388.1,438.1 390.7,440.5 395.0,439.5 398.2,437.7 401.0,440.3 404.6,439.9 418.6,439.9 422.0,441.6 422.0,441.6" fill="#d26edb" stroke="#221d72" stroke-width="2.5" stroke-linejoin="round" paint-order="stroke"/>
<polygon points="524.6,441.6 524.6,441.6 527.2,432.1 530.1,441.6 530.1,441.6" fill="#d26edb" stroke="#221d72" stroke-width="2.5" stroke-linejoin="round" paint-order="stroke"/>
<polygon points="274.2,440.5 275.3,428.6 276.2,427.0 277.6,440.5" fill="#f0b49a"/>
<polygon points="437.9,441.6 439.4,438.4 441.1,441.6" fill="#d8d860"/>
<rect x="52.6" y="441.5" width="638.4" height="1.1" fill="#241c66"/>
<path d="M49.5 441.80h1.6M49.5 437.77h1.6M49.5 433.73h1.6M49.5 429.70h1.6M49.5 425.66h1.6M49.5 421.63h1.6M49.5 417.60h1.6M49.5 413.56h1.6M49.5 409.53h1.6M49.5 405.49h1.6M49.5 401.46h1.6M49.5 397.43h1.6M49.5 393.39h1.6M49.5 389.36h1.6M49.5 385.32h1.6M49.5 381.29h1.6M49.5 377.26h1.6M49.5 373.22h1.6M49.5 369.19h1.6M49.5 365.15h1.6M49.5 361.12h1.6M49.5 357.09h1.6M49.5 353.05h1.6M49.5 349.02h1.6M49.5 344.98h1.6M49.5 340.95h1.6M49.5 336.92h1.6M49.5 332.88h1.6M49.5 328.85h1.6M49.5 324.81h1.6M49.5 320.78h1.6M49.5 316.75h1.6M49.5 312.71h1.6M49.5 308.68h1.6M49.5 304.64h1.6" stroke="#c4c4c4" stroke-width="0.7" fill="none"/>
<!-- legends -->
<rect x="52.2" y="252.8" width="9.6" height="9.6" fill="url(#gy)" stroke="#8a8a20" stroke-width="0.7"/>
<rect x="52.2" y="267.4" width="9.6" height="9.6" fill="url(#gm)" stroke="#a060a8" stroke-width="0.7"/>
<rect x="52.2" y="450" width="9.6" height="9.6" fill="url(#gy)" stroke="#8a8a20" stroke-width="0.7"/>
<rect x="52.2" y="464.6" width="9.6" height="9.6" fill="url(#gm)" stroke="#a060a8" stroke-width="0.7"/>
<!-- button -->
<rect x="605.9" y="488.6" width="87.2" height="15" fill="#e2e2e2" stroke="#adadad" stroke-width="0.9"/>
</svg>
<span class="t" id="t0" style="font-size:9.6px;color:#fff;top:6px;left:21.40px;transform:scaleX(0.8324);transform-origin:left center">Task Manager DeLuxe x64</span>
<span class="t" id="t1" style="font-size:8.6px;font-weight:bold;color:#000;top:30px;left:50.00px;transform:scaleX(1.0810);transform-origin:left center">JN-MUTL - Windows 10 Pro x64</span>
<span class="t" id="t2" style="font-size:8.2px;top:42px;left:50.00px;transform:scaleX(0.8448);transform-origin:left center">Version:</span>
<span class="t" id="t3" style="font-size:8.2px;top:42px;left:126.90px;transform:scaleX(0.9059);transform-origin:left center">User: Mutl</span>
<span class="t" id="t4" style="font-size:8.2px;top:51px;left:50.00px;transform:scaleX(0.8839);transform-origin:left center">Session: Local (</span>
<span class="t" id="t5" style="font-size:8.2px;top:51px;left:152.80px;transform:scaleX(0.8777);transform-origin:left center">)</span>
<span class="t" id="t6" style="font-size:8.2px;font-weight:bold;color:#222;top:25px;left:330.30px;width:200px;text-align:center;transform:scaleX(1.0219);transform-origin:center center">00:45:08</span>
<span class="t" id="t7" style="font-size:8.2px;top:39px;right:229.70px;transform:scaleX(0.8723);transform-origin:right center">56.34 kB</span>
<span class="t" id="t8" style="font-size:8.2px;top:50px;right:229.70px;transform:scaleX(0.8723);transform-origin:right center">50.66 kB</span>
<span class="t" id="t9" style="font-size:8.2px;color:#fff;top:25px;left:453.50px;width:200px;text-align:center;transform:scaleX(0.9553);transform-origin:center center">ekrn.exe: 1.11 MB</span>
<span class="t" id="t10" style="font-size:8.2px;color:#fff;top:38px;left:453.50px;width:200px;text-align:center;transform:scaleX(0.9437);transform-origin:center center">sqlservr.exe: 434.57 MB</span>
<span class="t" id="t11" style="font-size:8.2px;color:#fff;top:51px;left:453.50px;width:200px;text-align:center;transform:scaleX(0.9823);transform-origin:center center">AIMP.exe: 4.92%</span>
<span class="t" id="t12" style="font-size:8.2px;color:#fff;top:25px;left:562.80px;width:200px;text-align:center;transform:scaleX(0.8817);transform-origin:center center">AC Power</span>
<span class="t" id="t13" style="font-size:8.2px;color:#fff;top:38px;left:563.50px;width:200px;text-align:center;transform:scaleX(0.9453);transform-origin:center center">Mem: 40%</span>
<span class="t" id="t14" style="font-size:8.2px;color:#fff;top:51px;left:563.80px;width:200px;text-align:center;transform:scaleX(0.9490);transform-origin:center center">CPU: 11.34%</span>
<span class="t" id="t15" style="font-size:8.2px;top:72px;left:19.60px;transform:scaleX(0.9057);transform-origin:left center">Processes (228)</span>
<span class="t" id="t16" style="font-size:8.2px;top:72px;left:87.90px;transform:scaleX(0.9129);transform-origin:left center">Services (282)</span>
<span class="t" id="t17" style="font-size:8.2px;top:72px;left:150.30px;transform:scaleX(0.8876);transform-origin:left center">Sessions (2)</span>
<span class="t" id="t18" style="font-size:8.2px;top:72px;left:205.30px;transform:scaleX(0.9434);transform-origin:left center">Autoruns (46)</span>
<span class="t" id="t19" style="font-size:8.2px;top:72px;left:266.00px;transform:scaleX(0.9424);transform-origin:left center">Network</span>
<span class="t" id="t20" style="font-size:8.2px;font-weight:bold;color:#fff;top:72px;left:308.60px;transform:scaleX(1.0623);transform-origin:left center">Disk I/O</span>
<span class="t" id="t21" style="font-size:8.2px;top:72px;left:354.60px;transform:scaleX(0.7718);transform-origin:left center">GPU</span>
<span class="t" id="t22" style="font-size:8.2px;top:72px;left:382.90px;transform:scaleX(0.8981);transform-origin:left center">Performance</span>
<span class="t" id="t23" style="font-size:8.2px;top:72px;left:440.00px;transform:scaleX(0.8641);transform-origin:left center">System</span>
<span class="t" id="t24" style="font-size:8.2px;font-weight:bold;color:#000;top:89px;left:11.40px;transform:scaleX(1.1536);transform-origin:left center">I/O</span>
<span class="t" id="t25" style="font-size:8.2px;font-weight:bold;color:#000;top:286px;left:11.10px;transform:scaleX(0.9771);transform-origin:left center">Disk</span>
<span class="t" id="t26" style="font-size:8px;color:#2a2a2a;top:119px;right:647.70px;transform:scaleX(0.8886);transform-origin:right center">120 000</span>
<span class="t" id="t27" style="font-size:8px;color:#2a2a2a;top:140px;right:647.70px;transform:scaleX(0.8886);transform-origin:right center">100 000</span>
<span class="t" id="t28" style="font-size:8px;color:#2a2a2a;top:160px;right:647.70px;transform:scaleX(0.9155);transform-origin:right center">80 000</span>
<span class="t" id="t29" style="font-size:8px;color:#2a2a2a;top:180px;right:647.70px;transform:scaleX(0.9155);transform-origin:right center">60 000</span>
<span class="t" id="t30" style="font-size:8px;color:#2a2a2a;top:201px;right:647.70px;transform:scaleX(0.9155);transform-origin:right center">40 000</span>
<span class="t" id="t31" style="font-size:8px;color:#2a2a2a;top:221px;right:647.70px;transform:scaleX(0.9155);transform-origin:right center">20 000</span>
<span class="t" id="t32" style="font-size:8px;color:#2a2a2a;top:242px;right:647.10px;transform:scaleX(0.8309);transform-origin:right center">0</span>
<span class="t" id="t33" style="font-size:8px;color:#2a2a2a;top:298px;right:651.20px;transform:scaleX(0.9155);transform-origin:right center">70 000</span>
<span class="t" id="t34" style="font-size:8px;color:#2a2a2a;top:318px;right:651.20px;transform:scaleX(0.9155);transform-origin:right center">60 000</span>
<span class="t" id="t35" style="font-size:8px;color:#2a2a2a;top:338px;right:651.20px;transform:scaleX(0.9155);transform-origin:right center">50 000</span>
<span class="t" id="t36" style="font-size:8px;color:#2a2a2a;top:358px;right:651.20px;transform:scaleX(0.9155);transform-origin:right center">40 000</span>
<span class="t" id="t37" style="font-size:8px;color:#2a2a2a;top:378px;right:651.20px;transform:scaleX(0.9155);transform-origin:right center">30 000</span>
<span class="t" id="t38" style="font-size:8px;color:#2a2a2a;top:398px;right:651.20px;transform:scaleX(0.9155);transform-origin:right center">20 000</span>
<span class="t" id="t39" style="font-size:8px;color:#2a2a2a;top:419px;right:651.20px;transform:scaleX(0.9155);transform-origin:right center">10 000</span>
<span class="t" id="t40" style="font-size:8px;color:#2a2a2a;top:438px;right:651.20px;transform:scaleX(0.8309);transform-origin:right center">0</span>
<span class="t" id="t41" style="font-size:8.2px;top:253px;left:66.30px;transform:scaleX(0.9352);transform-origin:left center">I/O Read: 769.05 KB + Other: 73.00 KB</span>
<span class="t" id="t42" style="font-size:8.2px;top:268px;left:66.30px;transform:scaleX(0.9381);transform-origin:left center">I/O Write: 414.47 KB</span>
<span class="t" id="t43" style="font-size:8.2px;top:450px;left:66.00px;transform:scaleX(0.8946);transform-origin:left center">Disk Read: 85.49 KB</span>
<span class="t" id="t44" style="font-size:8.2px;top:465px;left:66.00px;transform:scaleX(0.9132);transform-origin:left center">Disk Write: 251.17 KB</span>
<span class="t" id="t45" style="font-size:8.2px;top:492px;left:14.70px;transform:scaleX(0.9511);transform-origin:left center">System started at</span>
<span class="t" id="t46" style="font-size:8.2px;top:491px;left:614.70px;transform:scaleX(0.8881);transform-origin:left center">Minimize all windows</span>
<span class="t" style="left:3.1px;top:167.9px;width:20px;text-align:center;transform:rotate(-90deg);font-size:8px;color:#333">kB</span>
<span class="t" style="left:1.2px;top:365.5px;width:20px;text-align:center;transform:rotate(-90deg);font-size:8px;color:#333">kB</span>
</body></html>
